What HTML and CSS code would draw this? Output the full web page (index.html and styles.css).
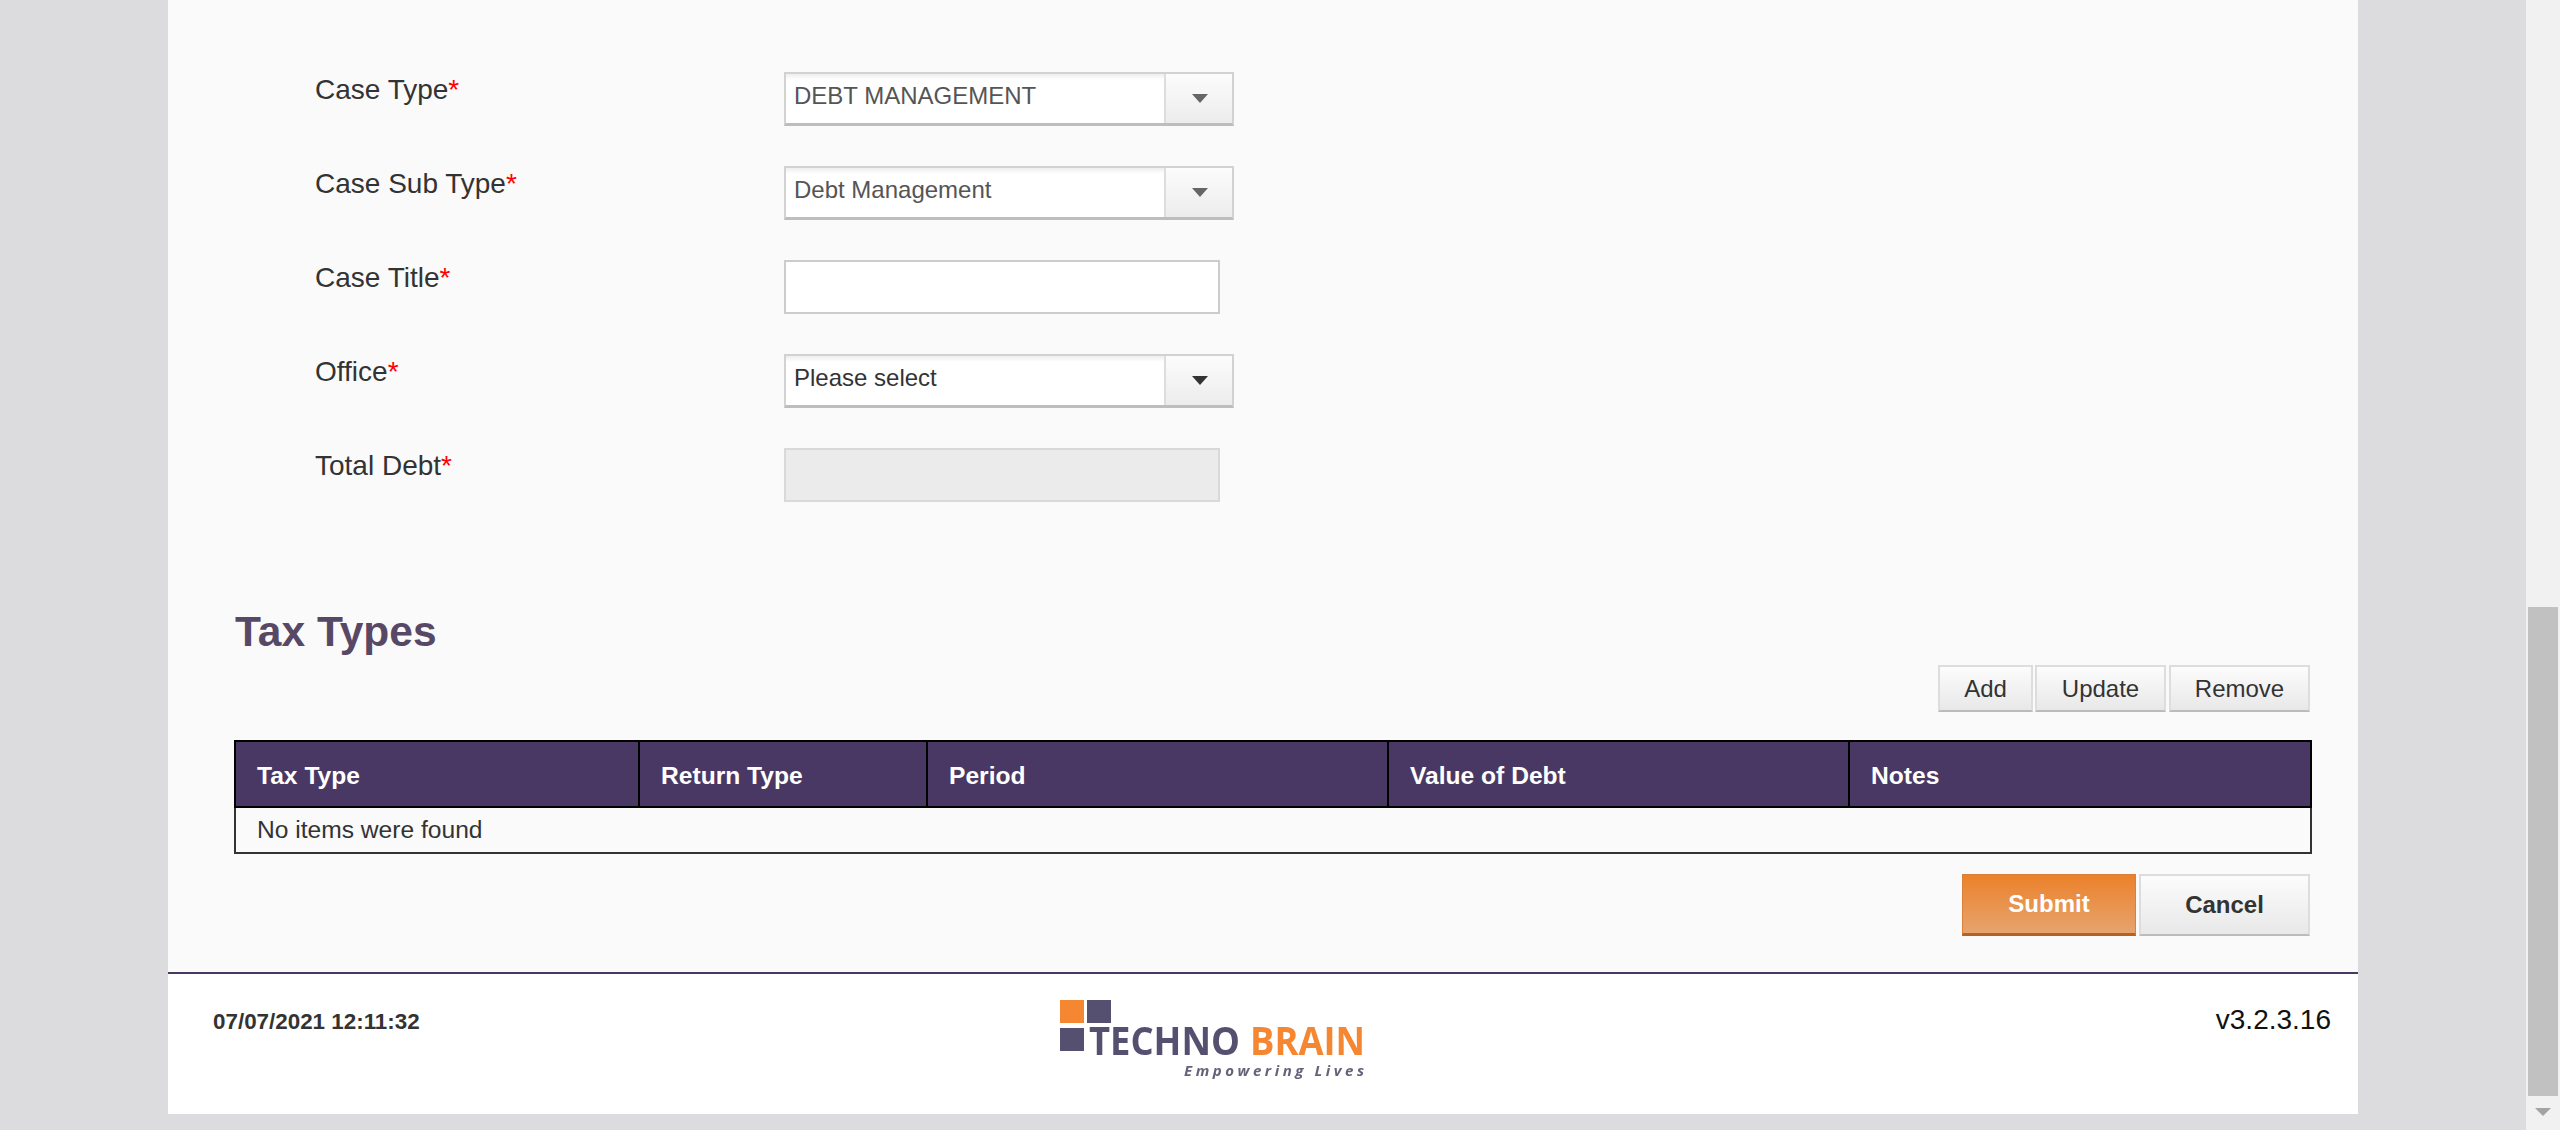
FILE: index.html
```html
<!DOCTYPE html>
<html lang="en">
<head>
  <meta charset="UTF-8">
  <meta name="viewport" content="width=device-width, initial-scale=1.0">
  <title>Create Case</title>
  <link rel="stylesheet" href="styles.css">
</head>
<body>
  <div class="viewport">
    <div class="panel">
      <div class="content">
        <div class="case-form">
          <div class="form-row">
            <label class="form-label">Case Type<span class="req">*</span></label>
            <div class="dropdown is-locked">
              <span class="dropdown-value">DEBT MANAGEMENT</span>
              <span class="dropdown-arrow"><i class="caret"></i></span>
            </div>
          </div>
          <div class="form-row">
            <label class="form-label">Case Sub Type<span class="req">*</span></label>
            <div class="dropdown is-locked">
              <span class="dropdown-value">Debt Management</span>
              <span class="dropdown-arrow"><i class="caret"></i></span>
            </div>
          </div>
          <div class="form-row">
            <label class="form-label" for="caseTitle">Case Title<span class="req">*</span></label>
            <input class="text-input" id="caseTitle" type="text">
          </div>
          <div class="form-row">
            <label class="form-label">Office<span class="req">*</span></label>
            <div class="dropdown">
              <span class="dropdown-value">Please select</span>
              <span class="dropdown-arrow"><i class="caret"></i></span>
            </div>
          </div>
          <div class="form-row">
            <label class="form-label" for="totalDebt">Total Debt<span class="req">*</span></label>
            <input class="text-input" id="totalDebt" type="text" disabled>
          </div>
        </div>

        <h2 class="section-title">Tax Types</h2>

        <div class="grid-actions">
          <button class="btn btn-add">Add</button>
          <button class="btn btn-update">Update</button>
          <button class="btn btn-remove">Remove</button>
        </div>

        <table class="grid">
          <thead>
            <tr>
              <th class="col-tax">Tax Type</th>
              <th class="col-return">Return Type</th>
              <th class="col-period">Period</th>
              <th class="col-value">Value of Debt</th>
              <th>Notes</th>
            </tr>
          </thead>
          <tbody>
            <tr>
              <td colspan="5">No items were found</td>
            </tr>
          </tbody>
        </table>

        <div class="form-actions">
          <button class="btn-large btn-submit">Submit</button>
          <button class="btn-large btn-cancel">Cancel</button>
        </div>
      </div>

      <footer class="footer">
        <div class="footer-date">07/07/2021 12:11:32</div>
        <svg class="logo" width="312" height="90" viewBox="0 0 312 90">
          <rect x="0" y="0" width="24" height="23" fill="#f58733"/>
          <rect x="27" y="0" width="24" height="23" fill="#55506f"/>
          <rect x="0" y="28" width="24" height="23" fill="#55506f"/>
          <text x="29" y="55" class="logo-techno" textLength="151" lengthAdjust="spacingAndGlyphs">TECHNO</text>
          <text x="190" y="55" class="logo-brain" textLength="115" lengthAdjust="spacingAndGlyphs">BRAIN</text>
          <text x="124" y="76" class="logo-tag" textLength="180">Empowering Lives</text>
        </svg>
        <div class="footer-version">v3.2.3.16</div>
      </footer>
    </div>
  </div>

  <div class="scrollbar">
    <div class="scroll-track">
      <div class="scroll-thumb"></div>
    </div>
    <div class="scroll-down"></div>
  </div>
</body>
</html>
```

FILE: styles.css
```css
html, body {
  height: 100%;
}

body {
  font-family: "Liberation Sans", Arial, sans-serif;
  background-color: #dcdcde;
  color: #333;
  margin: 0;
  height: 1130px;
  overflow: hidden;
  display: flex;
}

.viewport {
  flex: 1;
  padding: 0 168px 16px;
}

.panel {
  width: 2190px;
  height: 1114px;
  background-color: #fafafa;
  display: flex;
  flex-direction: column;
}

.content {
  flex: 1;
  padding: 72px 46px 0 66px;
}

/* form */
.case-form {
  padding-left: 81px;
  display: flex;
  flex-direction: column;
  gap: 40px;
}

.form-row {
  display: flex;
  height: 54px;
}

.form-label {
  width: 469px;
  font-size: 28px;
  line-height: 36px;
}

.req {
  color: #f00;
}

.dropdown {
  width: 450px;
  height: 54px;
  box-sizing: border-box;
  background-color: #fff;
  border: 2px solid #d2d2d2;
  border-bottom: 3px solid #bdbdbd;
  display: flex;
  font-size: 24px;
  color: #333;
}

.dropdown.is-locked {
  color: #555;
}

.dropdown-value {
  flex: 1;
  padding: 6px 8px 0;
  line-height: 32px;
  background: linear-gradient(to bottom, #eee, #fff 6px);
}

.dropdown-arrow {
  width: 64px;
  padding-left: 2px;
  border-left: 2px solid #ddd;
  background: linear-gradient(to bottom, #fcfcfc, #ececec);
  display: flex;
  align-items: center;
  justify-content: center;
}

.caret {
  width: 0;
  height: 0;
  border-left: 8px solid transparent;
  border-right: 8px solid transparent;
  border-top: 9px solid #333;
}

.is-locked .caret {
  border-top-color: #666;
}

.text-input {
  width: 436px;
  height: 54px;
  box-sizing: border-box;
  padding: 0 8px;
  margin: 0;
  background-color: #fff;
  border: 2px solid #ccc;
  border-radius: 0;
  outline: none;
}

.text-input:disabled {
  background-color: #ebebeb;
  border-color: #d9d9d9;
}

/* tax types */
.section-title {
  color: #574966;
  font-size: 42.5px;
  line-height: 46px;
  font-weight: bold;
  margin: 107px 0 0 1px;
}

.grid-actions {
  display: flex;
  justify-content: flex-end;
  gap: 2px;
  margin-top: 10px;
  padding-right: 2px;
}

.btn {
  height: 47px;
  box-sizing: border-box;
  padding: 0;
  font-family: inherit;
  font-size: 24px;
  color: #333;
  background: linear-gradient(to bottom, #fcfcfc, #e8e8e8);
  border: 2px solid #ddd;
  border-bottom-color: #bbb;
  border-radius: 0;
}

.btn-add {
  width: 95px;
}

.btn-update {
  width: 131px;
}

.btn-remove {
  width: 141px;
  margin-left: 1px;
}

.grid {
  width: 2078px;
  margin-top: 28px;
  border-collapse: collapse;
  table-layout: fixed;
  font-size: 24.6px;
  border: 2px solid #333;
}

.grid th {
  height: 66px;
  box-sizing: border-box;
  padding: 4px 0 0 21px;
  background-color: #4a3864;
  color: #fff;
  text-align: left;
  font-weight: bold;
  border: 2px solid #000;
}

.grid td {
  height: 46px;
  box-sizing: border-box;
  padding: 0 0 0 21px;
}

.col-tax {
  width: 404px;
}

.col-return {
  width: 288px;
}

.col-period {
  width: 461px;
}

.col-value {
  width: 461px;
}

.form-actions {
  display: flex;
  justify-content: flex-end;
  gap: 3px;
  margin-top: 20px;
  padding-right: 2px;
}

.btn-large {
  height: 62px;
  box-sizing: border-box;
  padding: 0;
  font-family: inherit;
  font-size: 24px;
  font-weight: bold;
  border-radius: 0;
}

.btn-submit {
  width: 174px;
  color: #fff;
  background: linear-gradient(to bottom, #ec812a, #e6a46f);
  border: 1px solid #d9813a;
  border-bottom: 3px solid #b9621f;
}

.btn-cancel {
  width: 171px;
  color: #333;
  background: linear-gradient(to bottom, #fcfcfc, #e8e8e8);
  border: 2px solid #ddd;
  border-bottom-color: #bbb;
}

/* footer */
.footer {
  height: 142px;
  box-sizing: border-box;
  background-color: #fff;
  border-top: 2px solid #4a3864;
  display: flex;
  padding: 26px 27px 0 45px;
  color: #222;
}

.footer-date {
  width: 847px;
  font-size: 22.4px;
  font-weight: bold;
  line-height: 44px;
  color: #333;
}

.logo {
  filter: blur(0.6px);
  overflow: visible;
}

.logo-techno,
.logo-brain {
  font-family: "Open Sans", sans-serif;
  font-size: 39px;
  font-weight: 700;
}

.logo-techno {
  fill: #55506f;
}

.logo-brain {
  fill: #f58733;
}

.logo-tag {
  font-family: "Open Sans", sans-serif;
  font-size: 15px;
  font-weight: 700;
  font-style: italic;
  fill: #66627a;
}

.footer-version {
  margin-left: auto;
  font-size: 28px;
  line-height: 39px;
  color: #111;
}

/* scrollbar */
.scrollbar {
  width: 34px;
  height: 1130px;
  background-color: #f1f1f1;
  display: flex;
  flex-direction: column;
}

.scroll-track {
  flex: 1;
  padding: 607px 2px 0;
}

.scroll-thumb {
  height: 489px;
  background-color: #c1c1c1;
}

.scroll-down {
  width: 0;
  height: 0;
  margin: 12px 9px 14px;
  border-left: 8px solid transparent;
  border-right: 8px solid transparent;
  border-top: 8px solid #a3a3a3;
}
```
